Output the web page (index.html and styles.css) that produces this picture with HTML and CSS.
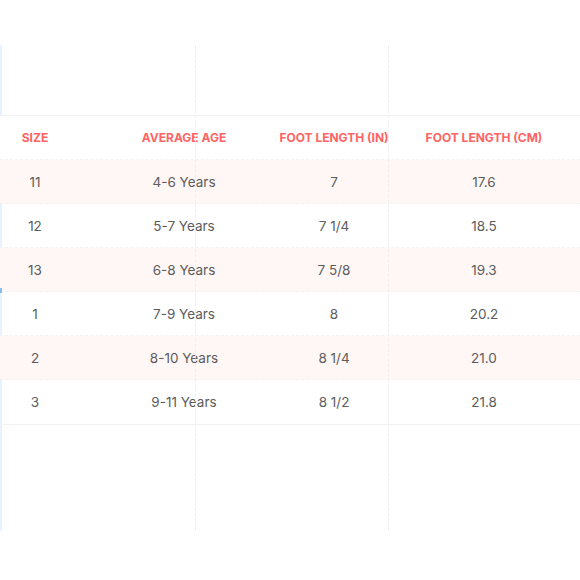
FILE: index.html
```html
<!DOCTYPE html>
<html>
<head>
<meta charset="utf-8">
<link rel="stylesheet" href="styles.css">
</head>
<body>
<div class="page">
  <div class="frame">
    <span class="guide guide-a"></span>
    <span class="guide guide-b"></span>
    <span class="marker"></span>
    <div class="spacer"></div>
    <div class="table">
      <div class="row head">
        <div class="cell first">SIZE</div>
        <div class="cell">AVERAGE AGE</div>
        <div class="cell">FOOT LENGTH (IN)</div>
        <div class="cell">FOOT LENGTH (CM)</div>
      </div>
      <div class="row tint">
        <div class="cell first">11</div><div class="cell">4-6 Years</div><div class="cell">7</div><div class="cell">17.6</div>
      </div>
      <div class="row">
        <div class="cell first">12</div><div class="cell">5-7 Years</div><div class="cell">7 1/4</div><div class="cell">18.5</div>
      </div>
      <div class="row tint">
        <div class="cell first">13</div><div class="cell">6-8 Years</div><div class="cell">7 5/8</div><div class="cell">19.3</div>
      </div>
      <div class="row">
        <div class="cell first">1</div><div class="cell">7-9 Years</div><div class="cell">8</div><div class="cell">20.2</div>
      </div>
      <div class="row tint">
        <div class="cell first">2</div><div class="cell">8-10 Years</div><div class="cell">8 1/4</div><div class="cell">21.0</div>
      </div>
      <div class="row">
        <div class="cell first">3</div><div class="cell">9-11 Years</div><div class="cell">8 1/2</div><div class="cell">21.8</div>
      </div>
    </div>
  </div>
</div>
</body>
</html>
```

FILE: styles.css
```css
html, body {
  margin: 0;
  padding: 0;
  background: #ffffff;
}

.page {
  padding-top: 45px;
  font-family: Inter, "Open Sans", sans-serif;
}

.frame {
  position: relative;
  height: 486px;
  border-left: 2px solid #e6f2fd;
}

.guide {
  position: absolute;
  top: 0;
  bottom: 0;
  width: 0;
  border-left: 1px dashed #efefef;
}

.guide-a { left: 193px; }
.guide-b { left: 386px; }

.marker {
  position: absolute;
  left: -2px;
  top: 243px;
  width: 2px;
  height: 5px;
  background: #86bdf2;
}

.spacer {
  height: 70px;
}

.table {
  border-top: 1px solid #f1f1f1;
  border-bottom: 1px solid #f1f1f1;
  margin-left: -2px;
}

.row {
  display: grid;
  grid-template-columns: 109px 150px 150px 150px 21px;
  height: 44px;
  align-items: center;
  border-bottom: 1px dashed #f3f3f3;
  box-sizing: border-box;
  color: #5c5c5c;
  font-size: 13.5px;
}

.row:last-child {
  border-bottom: none;
}

.row.tint {
  background: #fff6f6;
}

.cell {
  text-align: center;
  white-space: nowrap;
}

.cell.first {
  padding-right: 39px;
}

.head {
  color: #ff6464;
  font-weight: 700;
  font-size: 12px;
  letter-spacing: 0;
  background: #ffffff;
}
```
